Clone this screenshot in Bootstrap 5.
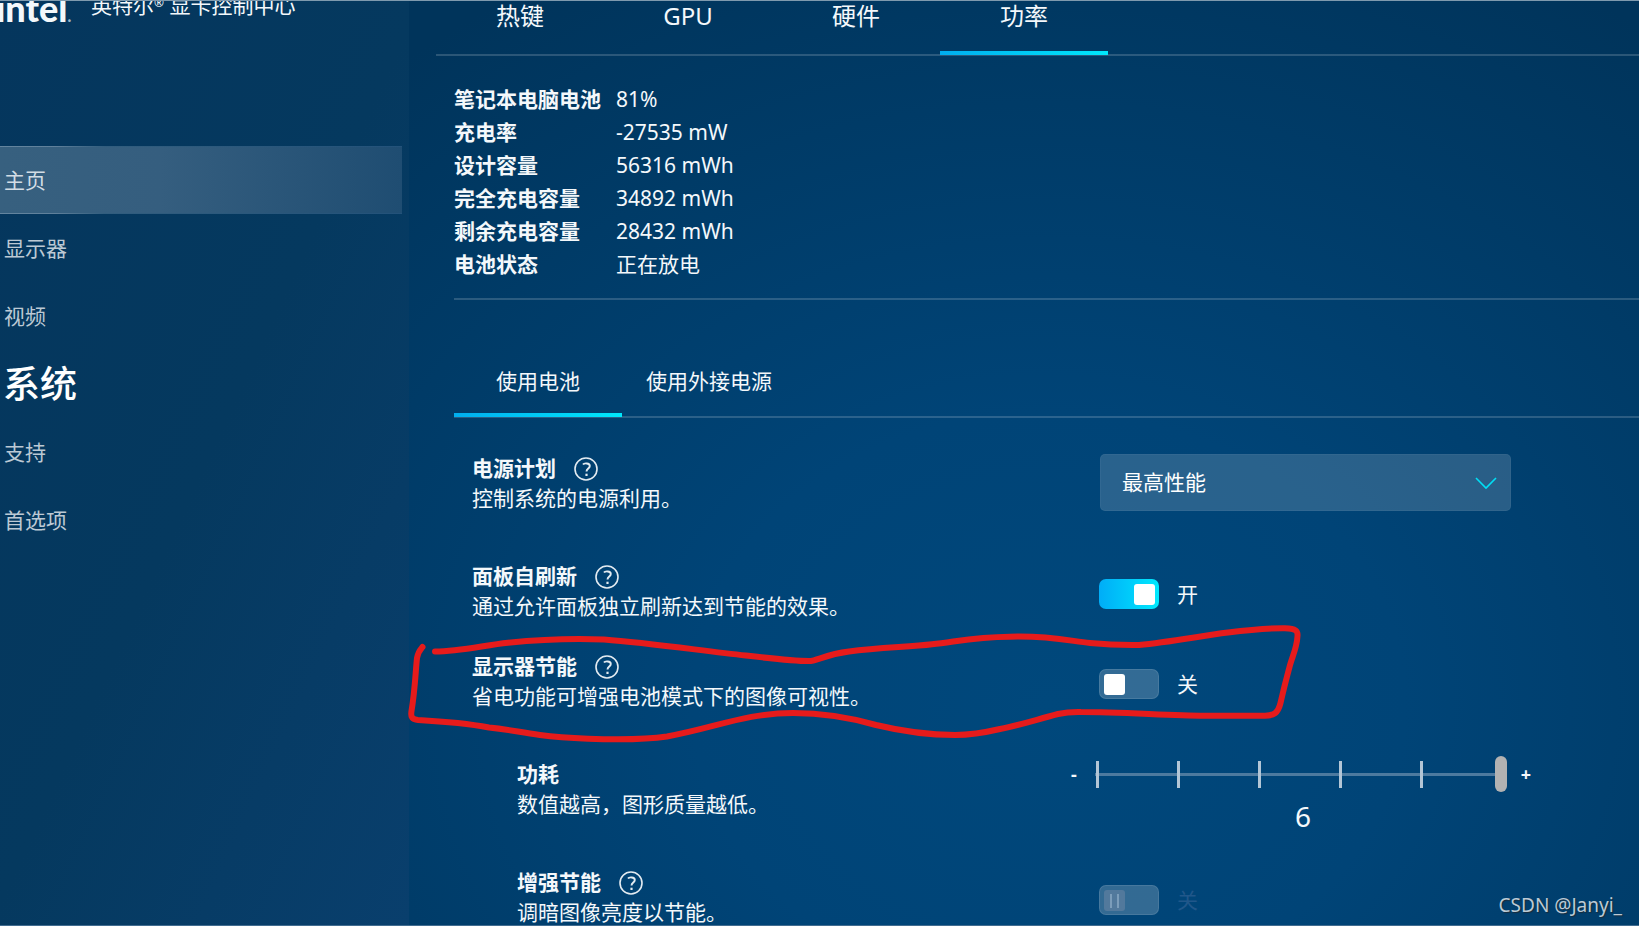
<!DOCTYPE html>
<html lang="zh-CN">
<head>
<meta charset="utf-8">
<meta name="viewport" content="width=device-width, initial-scale=1">
<title>英特尔® 显卡控制中心</title>
<link href="https://cdn.jsdelivr.net/npm/bootstrap@5.3.0/dist/css/bootstrap.min.css" rel="stylesheet">
<style>
  body {
    font-family: "Noto Sans", "Noto Sans CJK SC", sans-serif;
    font-size: 21px;
    line-height: 30px;
    color: #f4f8fb;
    background: #00345b radial-gradient(ellipse 62% 90% at 64% 76%, #00487c 0%, #004477 35%, #003b67 72%, #00345b 100%);
  }
  .app-shell { border-top: 1px solid #7f9aae; border-bottom: 1px solid #416c90; }
  .side-pane { width: 409px; padding-right: 7px; background: linear-gradient(115deg, #05365d 0%, #05395f 50%, #093f6d 100%); }
  .brand-bar { height: 145px; }
  .brand-logo { width: 95px; margin: -10px 0 0 -4px; font: 900 36px/34px Lato, sans-serif; }
  .brand-logo span { font-size: 16px; color: #9fb4c5; }
  .brand-name { margin-top: -11px; }
  .brand-name sup { font-size: 12px; top: -6px; line-height: 1; }
  .side-link { height: 68px; padding: 0 4px; color: #bcc9d4; }
  .side-link.hovered {
    color: #d3dde5;
    border-top: 1px solid;
    border-bottom: 1px solid;
    border-image: linear-gradient(90deg, #64859f 0, #5f809b 14%, #315d7e 26%, #23527a 100%) 1;
    background: linear-gradient(90deg, #37607f 0, #355e7f 40%, #1f4d72 100%);
  }
  .side-link.current { font-size: 37px; font-weight: 500; padding-left: 3px; color: #fff; }

  .main-pane { padding-left: 27px; min-width: 0; }
  .tab-strip { border-bottom: 2px solid rgba(255, 255, 255, .17); }
  .tab-strip button {
    min-width: 168px; padding: 0 24px; border: 0; background: none; color: #f4f8fb;
    display: flex; justify-content: center; margin-bottom: -1px;
  }
  .tab-strip button.active {
    border-bottom: 4px solid;
    border-image: linear-gradient(90deg, #00adef, #00e8fc) 1;
  }
  .top-tabs button { height: 54px; font-size: 24px; }
  .sub-tabs { margin-top: 46px; }
  .sub-tabs button { height: 71px; padding-top: 20px; }
  .pane-body { padding-left: 18px; }

  .battery-info { margin: 27px 0 17px; }
  .battery-info th, .battery-info td { padding: 0; line-height: 33px; font-weight: 400; }
  .battery-info th { width: 162px; font-weight: 700; }
  .divider { border-top: 2px solid rgba(255, 255, 255, .17); }

  .setting-list { padding: 35px 0 0 18px; gap: 48px; }
  .sub-list { padding-left: 45px; gap: 33px; }
  .linked { margin-top: -18px; }
  .title-line { gap: 18px; }
  .help-btn { width: 24px; height: 24px; margin-top: 2px; }
  .control-side { width: 540px; }
  .control-wide { width: 568px; margin-top: -3px; }
  .plan-select {
    width: 411px; height: 57px; margin: 1px 0 0 1px; padding: 0 21px; font-size: 21px; color: #fff;
    border: 1px solid rgba(255, 255, 255, .04); border-radius: 5px;
    background: rgba(255, 255, 255, .16) url("data:image/svg+xml,%3Csvg xmlns='http://www.w3.org/2000/svg' viewBox='0 0 22 14'%3E%3Cpath d='M1 2l10 10L21 2' fill='none' stroke='%2300dff5' stroke-width='1.6'/%3E%3C/svg%3E") no-repeat right 13px center / 22px 14px;
  }
  .plan-select option { color: #222; }
  .switch-line { padding-top: 18px; gap: 18px; }
  .power-switch {
    appearance: none; margin: 0; width: 60px; height: 30px; padding: 4px 3px 3px 4px; border-radius: 7px;
    border: 1px solid rgba(255, 255, 255, .1); background: rgba(255, 255, 255, .2);
    display: flex;
  }
  .power-switch::before { content: ""; width: 21px; height: 21px; border-radius: 3px; background: #fff; }
  .power-switch:checked { justify-content: flex-end; border-color: transparent; background: linear-gradient(90deg, #00adf7, #00e9fe) border-box; }
  .power-switch:disabled { opacity: 1; }
  .power-switch:disabled::before {
    background: linear-gradient(90deg, transparent 6px, #7c9dba 6px 8px, transparent 8px 13px, #7c9dba 13px 15px, transparent 15px) center / 100% 14px no-repeat, #52799c;
  }
  .switch-off-label { color: #20578a; }

  .level-line { gap: 14px; font-weight: 700; font-size: 18px; }
  .level-range {
    appearance: none; width: 416px; height: 36px; margin: 0;
    background:
      linear-gradient(#b3c6d6, #b3c6d6) 5px 50% / 3px 27px no-repeat,
      linear-gradient(#b3c6d6, #b3c6d6) 86px 50% / 3px 27px no-repeat,
      linear-gradient(#b3c6d6, #b3c6d6) 167px 50% / 3px 27px no-repeat,
      linear-gradient(#b3c6d6, #b3c6d6) 248px 50% / 3px 27px no-repeat,
      linear-gradient(#b3c6d6, #b3c6d6) 329px 50% / 3px 27px no-repeat,
      linear-gradient(#4d7a9f, #4d7a9f) 4px 50% / 400px 3px no-repeat;
  }
  .level-range::-webkit-slider-thumb { appearance: none; width: 12px; height: 36px; border-radius: 6px; background: #b2b2b2; }
  .level-value { width: 464px; font-size: 28px; line-height: 36px; margin-top: 6px; }

  .ink { left: 0; top: 0; pointer-events: none; }
  .watermark { right: 17px; bottom: 5px; font-size: 19px; color: #bccad5; text-shadow: 1px 1px 1px #1a2c3b; }
</style>
</head>
<body>
<div class="app-shell d-flex vh-100 overflow-hidden position-relative">
  <aside class="side-pane flex-shrink-0">
    <div class="brand-bar d-flex align-items-start">
      <div class="brand-logo">intel<span>.</span></div>
      <div class="brand-name">英特尔<sup>®</sup> 显卡控制中心</div>
    </div>
    <nav class="d-flex flex-column">
      <a href="#" class="side-link hovered d-flex align-items-center text-decoration-none">主页</a>
      <a href="#" class="side-link d-flex align-items-center text-decoration-none">显示器</a>
      <a href="#" class="side-link d-flex align-items-center text-decoration-none">视频</a>
      <a href="#" class="side-link current d-flex align-items-center text-decoration-none" aria-current="page">系统</a>
      <a href="#" class="side-link d-flex align-items-center text-decoration-none">支持</a>
      <a href="#" class="side-link d-flex align-items-center text-decoration-none">首选项</a>
    </nav>
  </aside>

  <main class="main-pane flex-grow-1">
    <div class="tab-strip top-tabs d-flex" role="tablist">
      <button type="button" role="tab">热键</button>
      <button type="button" role="tab">GPU</button>
      <button type="button" role="tab">硬件</button>
      <button type="button" role="tab" class="active" aria-selected="true">功率</button>
    </div>

    <div class="pane-body">
      <table class="battery-info">
        <tbody>
          <tr><th scope="row">笔记本电脑电池</th><td>81%</td></tr>
          <tr><th scope="row">充电率</th><td>-27535 mW</td></tr>
          <tr><th scope="row">设计容量</th><td>56316 mWh</td></tr>
          <tr><th scope="row">完全充电容量</th><td>34892 mWh</td></tr>
          <tr><th scope="row">剩余充电容量</th><td>28432 mWh</td></tr>
          <tr><th scope="row">电池状态</th><td>正在放电</td></tr>
        </tbody>
      </table>
      <div class="divider"></div>

      <div class="tab-strip sub-tabs d-flex" role="tablist">
        <button type="button" role="tab" class="active" aria-selected="true">使用电池</button>
        <button type="button" role="tab">使用外接电源</button>
      </div>

      <div class="setting-list d-flex flex-column">
        <div class="d-flex">
          <div class="flex-grow-1">
            <div class="title-line d-flex align-items-center">
              <label for="plan" class="fw-bold">电源计划</label>
              <button type="button" class="help-btn btn p-0 border-0 d-flex" aria-label="帮助"><svg width="24" height="24" viewBox="0 0 24 24" fill="none" stroke="#e3ebf1"><circle cx="12" cy="12" r="11" stroke-width="1.6"/><path d="M9 7.5c1-1.5 6.800-1.800 6.800 1.500 0 2.600-3.300 2.600-3.300 5.600" stroke-width="1.900"/><path d="M12.500 16.700v2.300" stroke-width="2.200"/></svg></button>
            </div>
            <div>控制系统的电源利用。</div>
          </div>
          <div class="control-side flex-shrink-0">
            <select id="plan" class="plan-select form-select"><option>最高性能</option><option>平衡</option></select>
          </div>
        </div>

        <div class="d-flex">
          <div class="flex-grow-1">
            <div class="title-line d-flex align-items-center">
              <label for="psr" class="fw-bold">面板自刷新</label>
              <button type="button" class="help-btn btn p-0 border-0 d-flex" aria-label="帮助"><svg width="24" height="24" viewBox="0 0 24 24" fill="none" stroke="#e3ebf1"><circle cx="12" cy="12" r="11" stroke-width="1.6"/><path d="M9 7.5c1-1.5 6.800-1.800 6.800 1.500 0 2.600-3.300 2.600-3.300 5.600" stroke-width="1.900"/><path d="M12.500 16.700v2.300" stroke-width="2.200"/></svg></button>
            </div>
            <div>通过允许面板独立刷新达到节能的效果。</div>
          </div>
          <div class="control-side switch-line flex-shrink-0 d-flex align-items-start">
            <input type="checkbox" role="switch" id="psr" class="power-switch" checked><span>开</span>
          </div>
        </div>

        <div class="linked d-flex">
          <div class="flex-grow-1">
            <div class="title-line d-flex align-items-center">
              <label for="dps" class="fw-bold">显示器节能</label>
              <button type="button" class="help-btn btn p-0 border-0 d-flex" aria-label="帮助"><svg width="24" height="24" viewBox="0 0 24 24" fill="none" stroke="#e3ebf1"><circle cx="12" cy="12" r="11" stroke-width="1.6"/><path d="M9 7.5c1-1.5 6.800-1.800 6.800 1.500 0 2.600-3.300 2.600-3.300 5.600" stroke-width="1.900"/><path d="M12.500 16.700v2.300" stroke-width="2.200"/></svg></button>
            </div>
            <div>省电功能可增强电池模式下的图像可视性。</div>
          </div>
          <div class="control-side switch-line flex-shrink-0 d-flex align-items-start">
            <input type="checkbox" role="switch" id="dps" class="power-switch"><span>关</span>
          </div>
        </div>

        <div class="sub-list d-flex flex-column">
          <div class="d-flex">
            <div class="flex-grow-1">
              <label for="level" class="fw-bold d-block">功耗</label>
              <div>数值越高，图形质量越低。</div>
            </div>
            <div class="control-wide flex-shrink-0">
              <div class="level-line d-flex align-items-center">
                <span>-</span>
                <input type="range" id="level" class="level-range" min="1" max="6" step="1" value="6">
                <span>+</span>
              </div>
              <output for="level" class="level-value d-block text-center">6</output>
            </div>
          </div>

          <div class="d-flex">
            <div class="flex-grow-1">
              <div class="title-line d-flex align-items-center">
                <label for="boost" class="fw-bold">增强节能</label>
                <button type="button" class="help-btn btn p-0 border-0 d-flex" aria-label="帮助"><svg width="24" height="24" viewBox="0 0 24 24" fill="none" stroke="#e3ebf1"><circle cx="12" cy="12" r="11" stroke-width="1.6"/><path d="M9 7.5c1-1.5 6.800-1.800 6.800 1.500 0 2.600-3.300 2.600-3.300 5.600" stroke-width="1.900"/><path d="M12.500 16.700v2.300" stroke-width="2.200"/></svg></button>
              </div>
              <div>调暗图像亮度以节能。</div>
            </div>
            <div class="control-side switch-line flex-shrink-0 d-flex align-items-start">
              <input type="checkbox" role="switch" id="boost" class="power-switch" disabled><span class="switch-off-label">关</span>
            </div>
          </div>
        </div>
      </div>
    </div>
  </main>

  <!-- Hand-drawn marker loop around the display power saving row -->
  <svg class="ink position-absolute" width="1639" height="924" viewBox="0 1 1639 924" fill="none" stroke="#e61b1b" stroke-width="6" stroke-linecap="round" stroke-linejoin="round" aria-hidden="true">
    <path d="M435 651.500C460 651.500 485 645 508 642.700C540 639.500 580 638.500 604 639.500C650 643 700 650.500 746 655.500C775 659 795 661 809 661C817 661 825 654.500 849 651.500C880 647.500 910 647 932 644.300C960 641 975 637 1010 636.700C1050 635.500 1070 641 1090 643C1110 645 1125 645.200 1139 645C1170 642 1200 636 1228 632.500C1255 629 1270 628 1285 628.200C1296 628.500 1298 631 1297.500 636C1297 648 1292 657 1289.500 667C1286 680 1283 692 1280.500 703C1278 713 1274 715.700 1265 715.700L1204 715.700C1170 715.500 1120 712 1081 712C1072 711.800 1067 712 1058 714C1035 720 1020 725 1000 729C985 732.500 972 735 955 735C930 735 905 732 876 725C855 719 825 713 793 713C745 713 715 728 667 736.500C640 740.500 610 739.500 588 738.700C570 738 555 737 540 735C520 732.500 510 729.500 489 727.500C465 723 445 721.500 418 720C412 719.500 410.500 717 411.500 711C415 690 415.500 672 417 658C418 652 420 650 422.500 647"/>
  </svg>
  <div class="watermark position-absolute">CSDN @Janyi_</div>
</div>
<script src="https://cdn.jsdelivr.net/npm/bootstrap@5.3.0/dist/js/bootstrap.bundle.min.js"></script>
</body>
</html>
